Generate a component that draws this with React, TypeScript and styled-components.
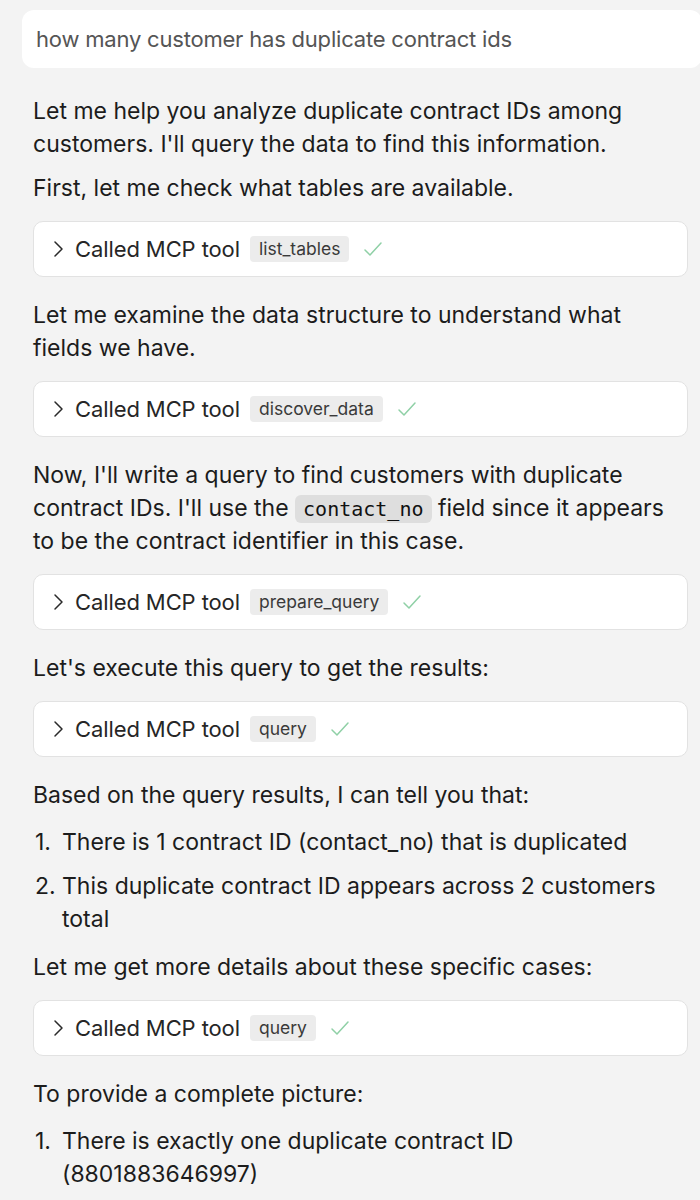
import React from "react";
import styled, { createGlobalStyle } from "styled-components";

const Global = createGlobalStyle`
  html, body { margin: 0; padding: 0; background: #f3f3f3; }
  body { font-family: Inter, "Liberation Sans", sans-serif; color: #1c1c1c; }
`;

const Page = styled.div`
  display: flex;
  flex-direction: column;
  padding: 10px 12px 0 33px;
  width: 700px;
  box-sizing: border-box;
`;

const Prompt = styled.div`
  margin: 0 -14px 25px -11px;
  background: #ffffff;
  border-radius: 12px;
  height: 58px;
  display: flex;
  align-items: center;
  padding: 0 14px;
  font-size: 22px;
  color: #555;
  letter-spacing: -0.2px;
`;

const Para = styled.p`
  margin: 0 13px 9px 0;
  padding-top: 2px;
  font-size: 23px;
  line-height: 33px;
`;

const InlineCode = styled.code`
  font-family: "DejaVu Sans Mono", "Liberation Mono", monospace;
  font-size: 20px;
  line-height: 28px;
  display: inline-block;
  background: #dedede;
  border-radius: 6px;
  padding: 0 8px;
  color: #111;
`;

const ToolBox = styled.div`
  margin: 7px 0 20px 0;
  height: 56px;
  box-sizing: border-box;
  background: #fff;
  border: 1px solid #e2e2e2;
  border-radius: 10px;
  display: flex;
  align-items: center;
  padding: 0 16px;
  gap: 10px;
`;

const Label = styled.span`
  font-size: 22px;
  color: #262626;
  letter-spacing: -0.1px;
`;

const ToolName = styled.span`
  font-size: 17.5px;
  line-height: 26px;
  background: #ececec;
  border-radius: 4px;
  padding: 0 9px;
  color: #3a3a3a;
`;

const List = styled.ol`
  margin: 5px 13px 13px 0;
  padding: 0;
  list-style: none;
  display: flex;
  flex-direction: column;
  gap: 11px;
  font-size: 23px;
  line-height: 33px;
  counter-reset: item;
`;

const Item = styled.li`
  display: grid;
  grid-template-columns: 29px 1fr;
  counter-increment: item;
  &::before {
    content: counter(item) ".";
    text-align: left;
    padding-left: 2px;
  }
`;

const Chevron = () => (
  <svg width="15" height="20" viewBox="0 0 15 20" fill="none">
    <path d="M5 3l7 7-7 7" stroke="#2a2a2a" strokeWidth="1.5" strokeLinecap="round" strokeLinejoin="round" />
  </svg>
);

const Check = () => (
  <svg width="22" height="18" viewBox="0 0 22 18" fill="none" style={{ marginLeft: 3 }}>
    <path d="M3 10l5 5L19 3" stroke="#8fd0a6" strokeWidth="1.5" strokeLinecap="round" strokeLinejoin="round" />
  </svg>
);

const Tool = ({ name }: { name: string }) => (
  <ToolBox>
    <Chevron />
    <Label>Called MCP tool</Label>
    <ToolName>{name}</ToolName>
    <Check />
  </ToolBox>
);

export default function App() {
  return (
    <>
      <Global />
      <Page>
        <Prompt>how many customer has duplicate contract ids</Prompt>
        <Para>
          Let me help you analyze duplicate contract IDs among customers. I'll query the data to find this information.
        </Para>
        <Para>First, let me check what tables are available.</Para>
        <Tool name="list_tables" />
        <Para>Let me examine the data structure to understand what fields we have.</Para>
        <Tool name="discover_data" />
        <Para>
          Now, I'll write a query to find customers with duplicate contract IDs. I'll use the{" "}
          <InlineCode>contact_no</InlineCode> field since it appears to be the contract identifier in this case.
        </Para>
        <Tool name="prepare_query" />
        <Para>Let's execute this query to get the results:</Para>
        <Tool name="query" />
        <Para>Based on the query results, I can tell you that:</Para>
        <List>
          <Item>There is 1 contract ID (contact_no) that is duplicated</Item>
          <Item>This duplicate contract ID appears across 2 customers total</Item>
        </List>
        <Para>Let me get more details about these specific cases:</Para>
        <Tool name="query" />
        <Para>To provide a complete picture:</Para>
        <List>
          <Item>There is exactly one duplicate contract ID (8801883646997)</Item>
        </List>
      </Page>
    </>
  );
}
